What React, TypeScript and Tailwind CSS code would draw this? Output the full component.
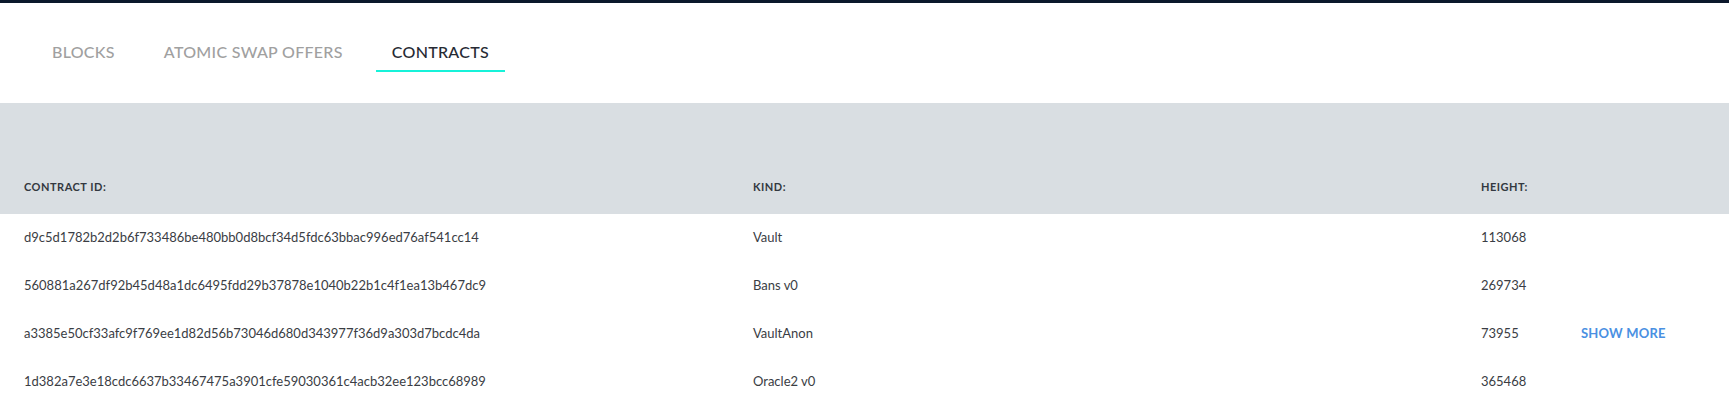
import React from "react";

const rows = [
  { id: "d9c5d1782b2d2b6f733486be480bb0d8bcf34d5fdc63bbac996ed76af541cc14", kind: "Vault", height: "113068", more: false },
  { id: "560881a267df92b45d48a1dc6495fdd29b37878e1040b22b1c4f1ea13b467dc9", kind: "Bans v0", height: "269734", more: false },
  { id: "a3385e50cf33afc9f769ee1d82d56b73046d680d343977f36d9a303d7bcdc4da", kind: "VaultAnon", height: "73955", more: true },
  { id: "1d382a7e3e18cdc6637b33467475a3901cfe59030361c4acb32ee123bcc68989", kind: "Oracle2 v0", height: "365468", more: false },
];

export default function App() {
  return (
    <div className="w-full min-h-screen bg-white" style={{ fontFamily: "Lato, 'Open Sans', sans-serif" }}>
      <div className="h-[3px] bg-[#0b182b]" />
      <div className="h-[100px] flex items-start pl-9 gap-[17px]">
        {["BLOCKS", "ATOMIC SWAP OFFERS", "CONTRACTS"].map((t) => {
          const active = t === "CONTRACTS";
          return (
            <div
              key={t}
              className={
                "pt-[37px] pb-[6px] px-4 text-[16px] leading-6 font-medium tracking-[0.3px] border-b-2 " +
                (active ? "text-[#262a33] border-[#17f2d9]" : "text-[#a0a0a0] border-transparent")
              }
            >
              {t}
            </div>
          );
        })}
      </div>
      <div className="bg-[#d9dee2] pt-[57px]">
        <div className="grid grid-cols-[729px_728px_100px_1fr] h-[54px] items-center text-[11px] font-bold text-[#333840] tracking-[0.5px]">
          <div className="pl-6">CONTRACT ID:</div>
          <div className="pl-6">KIND:</div>
          <div className="pl-6">HEIGHT:</div>
          <div />
        </div>
      </div>
      <div>
        {rows.map((r) => (
          <div key={r.id} className="grid grid-cols-[729px_728px_100px_1fr] h-12 items-center text-[13px] text-[#3a3d44]">
            <div className="pl-6">{r.id}</div>
            <div className="pl-6">{r.kind}</div>
            <div className="pl-6">{r.height}</div>
            <div className="pl-6">
              {r.more && (
                <span className="text-[13px] font-bold text-[#4a90e2] tracking-[0.2px]">SHOW MORE</span>
              )}
            </div>
          </div>
        ))}
      </div>
    </div>
  );
}
